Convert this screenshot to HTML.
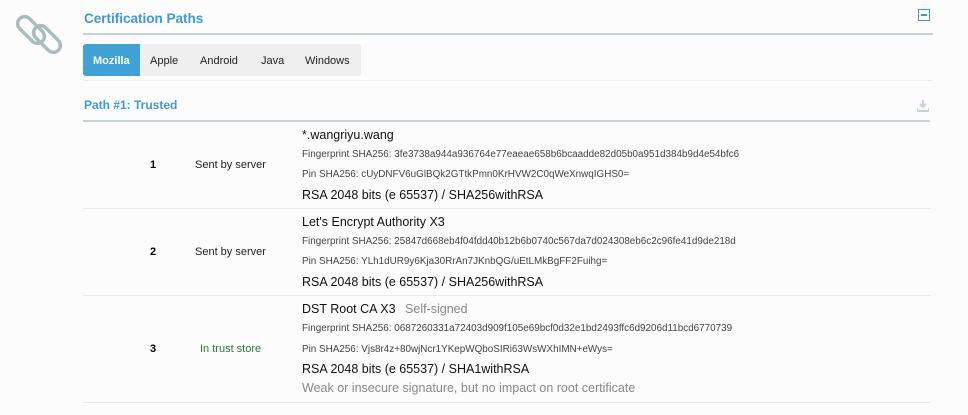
<!DOCTYPE html>
<html><head><style>
body{margin:0;width:968px;height:415px;background:#fcfcfc;font-family:"Liberation Sans",sans-serif;position:relative;overflow:hidden}
.a{position:absolute;white-space:nowrap;line-height:1}
.t{font-size:12.5px;color:#111}
.s{font-size:9.9px;color:#444}
.h{font-size:13px;font-weight:bold;color:#3e9ad6}
.ln{position:absolute;left:83px;height:1px;background:#e8ebec}
</style></head><body>
<svg style="position:absolute;left:14px;top:12px" width="52" height="44" viewBox="0 0 52 44">
<g fill="none" stroke="#a9bcc1" stroke-width="3.5">
<rect x="1" y="11" width="32" height="14" rx="7" transform="rotate(45 17 18)"/>
<rect x="17" y="20" width="32" height="14" rx="7" transform="rotate(45 33 27)"/>
</g></svg>
<div class="a h" style="left:84px;top:12px;font-size:13.5px">Certification Paths</div>
<div style="position:absolute;left:918px;top:9px;width:12px;height:12px;border:1px solid #3e9ad6;box-sizing:border-box"><div style="position:absolute;left:2px;top:4px;width:6px;height:2px;background:#3e9ad6"></div></div>
<div style="position:absolute;left:83px;top:33px;width:850px;height:2px;background:#c6d2d5"></div>
<div style="position:absolute;left:83px;top:44px;width:278px;height:32px;background:#efefef;border-radius:3px"></div>
<div style="position:absolute;left:83px;top:44px;width:57px;height:32px;background:#3fa1d4;border-radius:3px 0 0 3px"></div>
<div class="a" style="left:93px;top:56px;font-size:11px;color:#fff;font-weight:bold">Mozilla</div>
<div class="a" style="left:150px;top:56px;font-size:11px;color:#222">Apple</div>
<div class="a" style="left:200px;top:56px;font-size:11px;color:#222">Android</div>
<div class="a" style="left:261px;top:56px;font-size:11px;color:#222">Java</div>
<div class="a" style="left:305px;top:56px;font-size:11px;color:#222">Windows</div>
<div class="ln" style="top:80px;width:850px;background:#eeeeee"></div>
<div class="a h" style="left:84px;top:99px;font-size:12px">Path #1: Trusted</div>
<svg style="position:absolute;left:917px;top:100px" width="12" height="12" viewBox="0 0 12 12"><path d="M6 0v6M3 4l3 3 3-3M0 8v3h12V8" stroke="#ccd3d6" stroke-width="2" fill="none"/></svg>
<div style="position:absolute;left:83px;top:120px;width:847px;height:2px;background:#c6d2d5"></div>

<div class="a" style="left:150px;top:160px;font-size:11px;font-weight:bold">1</div>
<div class="a" style="left:195px;top:160px;font-size:11px;color:#222">Sent by server</div>
<div class="a t" style="left:302px;top:129px">*.wangriyu.wang</div>
<div class="a s" style="left:302px;top:150px">Fingerprint SHA256: 3fe3738a944a936764e77eaeae658b6bcaadde82d05b0a951d384b9d4e54bfc6</div>
<div class="a s" style="left:302px;top:170px">Pin SHA256: cUyDNFV6uGlBQk2GTtkPmn0KrHVW2C0qWeXnwqIGHS0=</div>
<div class="a t" style="left:302px;top:189px">RSA 2048 bits (e 65537) / SHA256withRSA</div>
<div class="ln" style="top:208px;width:847px"></div>

<div class="a" style="left:150px;top:247px;font-size:11px;font-weight:bold">2</div>
<div class="a" style="left:195px;top:247px;font-size:11px;color:#222">Sent by server</div>
<div class="a t" style="left:302px;top:216px">Let's Encrypt Authority X3</div>
<div class="a s" style="left:302px;top:237px">Fingerprint SHA256: 25847d668eb4f04fdd40b12b6b0740c567da7d024308eb6c2c96fe41d9de218d</div>
<div class="a s" style="left:302px;top:257px">Pin SHA256: YLh1dUR9y6Kja30RrAn7JKnbQG/uEtLMkBgFF2Fuihg=</div>
<div class="a t" style="left:302px;top:276px">RSA 2048 bits (e 65537) / SHA256withRSA</div>
<div class="ln" style="top:295px;width:847px"></div>

<div class="a" style="left:150px;top:344px;font-size:11px;font-weight:bold">3</div>
<div class="a" style="left:200px;top:344px;font-size:11px;color:#2b7a2b">In trust store</div>
<div class="a t" style="left:302px;top:303px">DST Root CA X3 <span style="color:#888;margin-left:6px">Self-signed</span></div>
<div class="a s" style="left:302px;top:324px">Fingerprint SHA256: 0687260331a72403d909f105e69bcf0d32e1bd2493ffc6d9206d11bcd6770739</div>
<div class="a s" style="left:302px;top:345px">Pin SHA256: Vjs8r4z+80wjNcr1YKepWQboSIRi63WsWXhIMN+eWys=</div>
<div class="a t" style="left:302px;top:363px">RSA 2048 bits (e 65537) / SHA1withRSA</div>
<div class="a t" style="left:302px;top:382px;color:#888">Weak or insecure signature, but no impact on root certificate</div>
<div class="ln" style="top:402px;width:847px"></div>
</body></html>
